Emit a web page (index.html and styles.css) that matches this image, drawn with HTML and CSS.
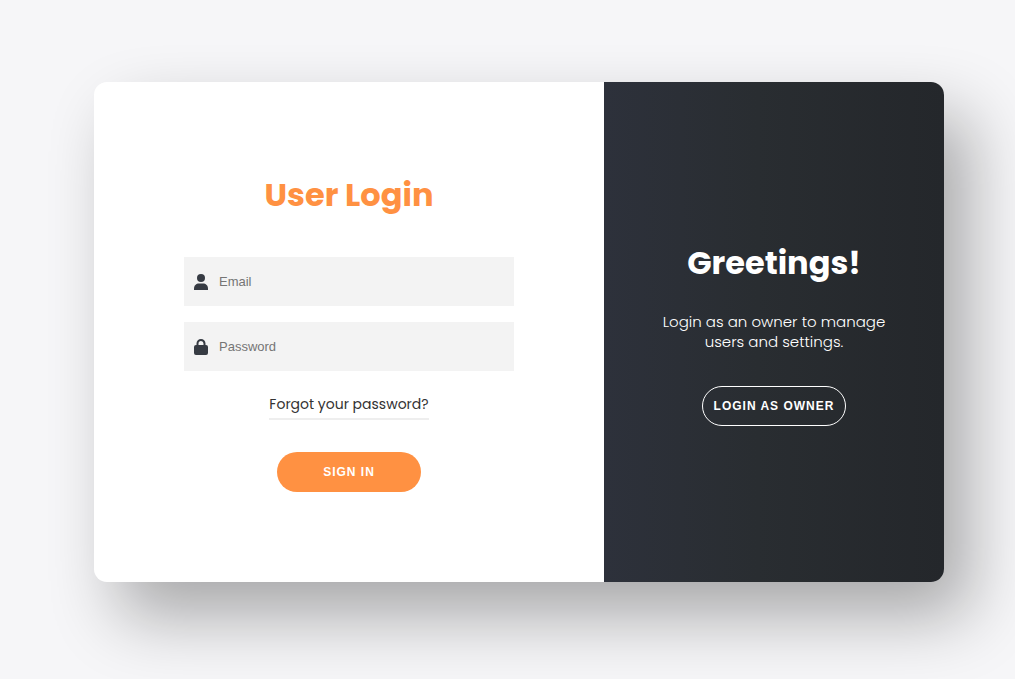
FILE: index.html
```html
<!DOCTYPE html>
<html lang="en">
<head>
<meta charset="utf-8">
<meta name="viewport" content="width=device-width, initial-scale=1">
<title>User Login</title>
<link rel="stylesheet" href="styles.css">
</head>
<body>
<main class="card">
  <form class="login">
    <h1 class="title title-accent">User Login</h1>
    <div class="fields">
      <label class="field">
        <svg class="icon" viewBox="0 0 14 16" aria-hidden="true"><circle cx="7" cy="4" r="4"/><path d="M0 16v-1.500C0 11.500 2.200 9.500 5 9.500h4c2.800 0 5 2 5 5V16z"/></svg>
        <input class="input" type="email" placeholder="Email" aria-label="Email">
      </label>
      <label class="field">
        <svg class="icon" viewBox="0 0 14 16" aria-hidden="true"><path fill-rule="evenodd" d="M2.500 6V4.500a4.500 4.500 0 0 1 9 0V6h.5a2 2 0 0 1 2 2v6a2 2 0 0 1-2 2H2a2 2 0 0 1-2-2V8a2 2 0 0 1 2-2zm2 0h5V4.500a2.500 2.500 0 0 0-5 0z"/></svg>
        <input class="input" type="password" placeholder="Password" aria-label="Password">
      </label>
    </div>
    <a class="forgot" href="#">Forgot your password?</a>
    <button class="button" type="submit">SIGN IN</button>
  </form>
  <section class="greeting">
    <h2 class="title">Greetings!</h2>
    <p class="message">Login as an owner to manage users and settings.</p>
    <button class="button button-outline" type="button">LOGIN AS OWNER</button>
  </section>
</main>
</body>
</html>
```
FILE: styles.css
```css
* {
  box-sizing: border-box;
}

body {
  margin: 0;
  min-height: 100vh;
  display: flex;
  align-items: center;
  justify-content: center;
  padding: 0 0 15px 23px;
  background: #f6f6f8;
  color: #333;
  font-family: Poppins, Inter, sans-serif;
}

.card {
  flex: 0 1 850px;
  min-height: 500px;
  display: grid;
  grid-template-columns: 3fr 2fr;
  overflow: hidden;
  border-radius: 13px;
  background: #fff;
  box-shadow: 25px 34px 68px rgba(0, 0, 0, 0.32);
}

.login,
.greeting {
  display: flex;
  flex-direction: column;
  align-items: center;
  justify-content: center;
}

.login {
  padding: 0 90px 2px;
}

.greeting {
  padding: 0 50px;
  background: linear-gradient(to right, #2d313b, #292d31 45%, #24272b);
  color: #fff;
  text-align: center;
}

.title {
  margin: 0;
  font-size: 32px;
  font-weight: 700;
  line-height: 48px;
}

.title-accent {
  color: #ff9142;
}

.fields {
  align-self: stretch;
  display: grid;
  gap: 16px;
  margin-top: 38px;
}

.field {
  display: flex;
  align-items: center;
  gap: 11px;
  height: 49px;
  padding: 2px 10px 0;
  background: #f3f3f3;
}

.icon {
  flex: none;
  width: 14px;
  height: 16px;
  fill: #363b43;
}

.input {
  flex: 1;
  min-width: 0;
  padding: 0 0 2px;
  border: 0;
  outline: 0;
  background: none;
  color: #333;
  font: 13px "Liberation Sans", Arial, sans-serif;
}

.input::placeholder {
  color: #757575;
}

.forgot {
  margin-top: 23px;
  padding-bottom: 4px;
  border-bottom: 2px solid #eee;
  color: #333;
  font-size: 14px;
  line-height: 20px;
  text-decoration: none;
}

.button {
  width: 144px;
  height: 40px;
  margin-top: 32px;
  padding: 0;
  border: 0;
  border-radius: 20px;
  background: #ff9142;
  color: #fff;
  font: 700 12px "Liberation Sans", Arial, sans-serif;
  letter-spacing: 1px;
}

.button-outline {
  margin-top: 34px;
  border: 1px solid #fff;
  background: none;
}

.message {
  margin: 25px 0 0;
  font-size: 15px;
  font-weight: 300;
  line-height: 20px;
}
```
